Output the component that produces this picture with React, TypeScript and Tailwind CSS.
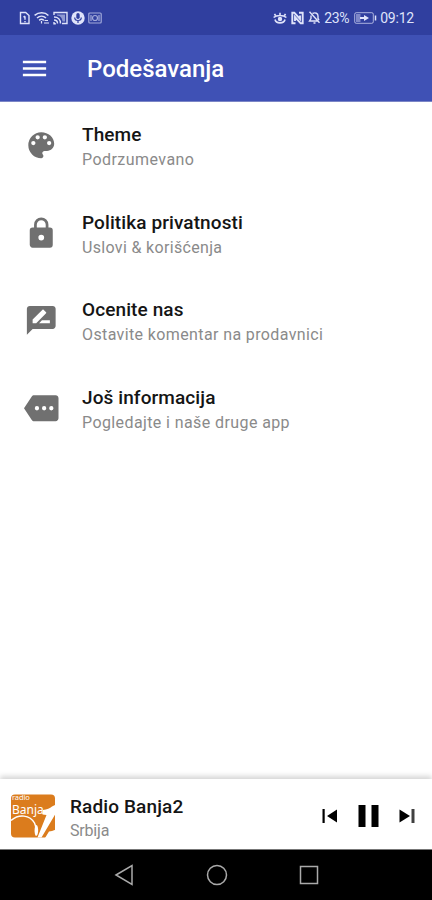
import React from 'react';

const settings = [
  {
    title: 'Theme',
    detail: 'Podrzumevano',
    detailSpacing: 'tracking-[0.45px]',
    icon: 'M12 3a9 9 0 0 0 0 18c.83 0 1.5-.67 1.5-1.5 0-.39-.15-.74-.39-1.01-.23-.26-.38-.61-.38-.99 0-.83.67-1.5 1.5-1.5H16c2.76 0 5-2.24 5-5 0-4.42-4.03-8-9-8zm-5.5 9a1.5 1.5 0 1 1 0-3 1.5 1.5 0 0 1 0 3zm3-4a1.5 1.5 0 1 1 0-3 1.5 1.5 0 0 1 0 3zm5 0a1.5 1.5 0 1 1 0-3 1.5 1.5 0 0 1 0 3zm3 4a1.5 1.5 0 1 1 0-3 1.5 1.5 0 0 1 0 3z',
  },
  {
    title: 'Politika privatnosti',
    detail: 'Uslovi & korišćenja',
    detailSpacing: 'tracking-[0.33px]',
    icon: 'M18 8h-1V6A5 5 0 0 0 7 6v2H6a2 2 0 0 0-2 2v10c0 1.1.9 2 2 2h12a2 2 0 0 0 2-2V10a2 2 0 0 0-2-2zm-6 9a2 2 0 1 1 0-4 2 2 0 0 1 0 4zm3.1-9H8.9V6a3.1 3.1 0 0 1 6.2 0v2z',
  },
  {
    title: 'Ocenite nas',
    detail: 'Ostavite komentar na prodavnici',
    detailSpacing: 'tracking-[0.38px]',
    icon: 'M20 2H4c-1.1 0-2 .9-2 2v18l4-4h14c1.1 0 2-.9 2-2V4c0-1.1-.9-2-2-2zM6 14v-2.47l6.88-6.88c.2-.2.51-.2.71 0l1.77 1.77c.2.2.2.51 0 .71L8.47 14H6zm12 0h-7.5l2-2H18v2z',
  },
  {
    title: 'Još informacija',
    detail: 'Pogledajte i naše druge app',
    detailSpacing: 'tracking-[0.4px]',
    icon: 'M22 3H7c-.69 0-1.23.35-1.59.88L0 12l5.41 8.11c.36.53.97.89 1.66.89H22c1.1 0 2-.9 2-2V5c0-1.1-.9-2-2-2zM9 13.5a1.5 1.5 0 1 1 0-3 1.5 1.5 0 0 1 0 3zm5 0a1.5 1.5 0 1 1 0-3 1.5 1.5 0 0 1 0 3zm5 0a1.5 1.5 0 1 1 0-3 1.5 1.5 0 0 1 0 3z',
  },
];

function StatusBar() {
  return (
    <div className="flex h-[35px] shrink-0 items-center justify-between bg-[#303f9f] pl-[19px] pr-[18px] text-[#dfe3fa]">
      <div className="flex items-center gap-[3px]">
        <svg className="h-[14px] w-[12px]" viewBox="0 0 12 14" fill="none" stroke="currentColor" strokeWidth="1.4">
          <path d="M1.5 1.5h5.2l3.3 3v8H1.5zM6 5.2v3.5M6 10v1.3M4.5 6.2L6 5.2" />
        </svg>
        <svg className="h-[14px] w-[16px]" viewBox="0 0 16 14" fill="none" stroke="currentColor" strokeWidth="1.5">
          <path d="M.6 4.4C4.5.9 11 .9 14.4 4.4M3 7c2.7-2.3 6.4-2.3 9 0M5.2 9.4c1.4-1.3 3.3-1.3 4.6 0" />
          <path d="M7.5 10v2.5M10 12h5M10.5 9.5H14" strokeWidth="1.2" />
        </svg>
        <svg className="h-[14px] w-[15px]" viewBox="0 0 15 14" fill="none" stroke="currentColor" strokeWidth="1.4">
          <path d="M1 4V1.5h13v11H9M1 6c4 0 6.5 2.5 6.5 6.5M1 9c2.2 0 3.5 1.3 3.5 3.5" />
          <path d="M4 3.5h8v7H9.5C9 6.5 7.5 5 4 4.5z" fill="currentColor" opacity=".55" stroke="none" />
          <path d="M1 11v1.8h1.8" />
        </svg>
        <svg className="h-[14px] w-[14px]" viewBox="0 0 14 14" fill="none">
          <circle cx="7" cy="7" r="6.7" fill="currentColor" />
          <rect x="5.3" y="2" width="3.4" height="6" rx="1.7" fill="#303f9f" />
          <path d="M3.7 6.5c0 4 6.6 4 6.6 0M7 9.5V12" stroke="#303f9f" strokeWidth="1.2" />
        </svg>
        <svg className="h-[12px] w-[14px] opacity-65" viewBox="0 0 14 12" fill="none" stroke="currentColor" strokeWidth="1.2">
          <rect x=".8" y="1" width="12.4" height="10" rx="1" />
          <circle cx="7" cy="6" r="2.5" />
          <path d="M3 3v6M11 3v6" />
        </svg>
      </div>
      <div className="flex items-center">
        <svg className="mr-[4px] h-[14px] w-[14px]" viewBox="0 0 14 14" fill="none" stroke="currentColor" strokeWidth="1.6">
          <path d="M.6 6.5c3-2.6 9.8-2.6 12.8 0M2 8.5c1 4.5 9 4.5 10 0M2.5 4.5L1.5 2.8M7 4V1.8M11.5 4.5l1-1.7" />
          <circle cx="7" cy="8" r="2.2" fill="currentColor" stroke="none" />
        </svg>
        <svg className="mr-[4px] h-[14px] w-[13px]" viewBox="0 0 13 14" fill="none" stroke="currentColor" strokeWidth="1.9">
          <path d="M4.5 12.3H1.3V1.7h2L9 8V4.5M8 1.7h3.7v10.6h-2L4 6v4" />
        </svg>
        <svg className="mr-[3px] h-[13px] w-[13px]" viewBox="0 0 12 13" fill="none" stroke="currentColor" strokeWidth="1.4">
          <path d="M1 .8l10 11M2.5 4.500v3L1 10h8M4 2.5C7 1 9.5 2.5 9.5 5v2.500l1 1.500M5 12h2" />
        </svg>
        <span className="w-[26px] text-[14px] leading-none tracking-[-0.3px]">23%</span>
        <svg className="ml-[4px] mr-[3px] h-[12px] w-[23px]" viewBox="0 0 23 12" fill="none">
          <rect x=".7" y=".7" width="18.6" height="10.6" rx="1.5" stroke="currentColor" strokeWidth="1" opacity=".7" />
          <rect x="2" y="2" width="4.5" height="8" fill="currentColor" opacity=".45" />
          <path d="M6 5h4V3l5 3-5 3V7H6z" fill="currentColor" />
          <path d="M21.500 3.500v5" stroke="currentColor" strokeWidth="1.5" />
        </svg>
        <span className="text-[14px] leading-none tracking-[-0.2px]">09:12</span>
      </div>
    </div>
  );
}

function StationLogo() {
  return (
    <div className="relative h-[44px] w-[45px] shrink-0 text-white">
      <svg className="h-[44px] w-[45px]" viewBox="0 0 45 44">
        <rect width="44" height="43" y=".5" rx="4" fill="#db7c1d" />
        <path d="M32 16q6-1 9-3.500l4-2V19L30.500 43.500h-4L35.500 21l-4-.5z" fill="white" />
        <path d="M45 35.500l-4 1.500-3 .5-4 6.500h11z" fill="white" />
        <path d="M0 26.500C8 19.500 19 21 23.500 29q1.500 3 1.500 7" fill="none" stroke="white" strokeWidth="1.500" />
        <path d="M25.500 31c-2.500 0-2.500 10-.5 11 2.500 0 3-10 .5-11z" fill="white" />
      </svg>
      <div className="absolute left-[1px] top-[-1px] font-['Noto_Sans',sans-serif]">
        <p className="text-[7.5px] leading-[9px] tracking-[-0.1px]">radio</p>
        <p className="text-[12px] leading-[15px]">Banja</p>
      </div>
    </div>
  );
}

function PlayerBar() {
  return (
    <div className="flex h-[70px] shrink-0 items-center bg-white pl-[11px] pt-[4px] shadow-[0_-3px_5px_rgba(0,0,0,0.16)]">
      <StationLogo />
      <div className="ml-[14px] flex-1 pt-[4px]">
        <p className="text-[19px] leading-[25px] font-medium tracking-[0.12px] text-[#151515]">Radio Banja2</p>
        <p className="text-[16px] leading-[23px] tracking-[-0.2px] text-[#8a8a8a]">Srbija</p>
      </div>
      <div className="flex items-center pr-[17px] text-black">
        <svg className="h-[16px] w-[16px]" viewBox="0 0 16 16" fill="currentColor">
          <path d="M.5 1h2.200v14H.5zM15 1.500v13L5 8z" />
        </svg>
        <svg className="ml-[20px] h-[24px] w-[21px]" viewBox="0 0 21 24" fill="currentColor">
          <path d="M.5 1h7v22h-7zM13.500 1h7v22h-7z" />
        </svg>
        <svg className="ml-[20px] h-[16px] w-[16px]" viewBox="0 0 16 16" fill="currentColor">
          <path d="M.5 1.500L11 8 .5 14.500z" />
          <path d="M12.500 1h3v14h-3z" opacity=".75" />
        </svg>
      </div>
    </div>
  );
}

export default function App() {
  return (
    <div className="flex h-[900px] w-[432px] flex-col overflow-hidden bg-white font-[Roboto,sans-serif]">
      <StatusBar />
      <header className="flex h-[67px] shrink-0 items-center border-b border-[#7b86c6] bg-[#3f51b5] pl-[19px] text-white">
        <svg className="h-[31px] w-[31px]" viewBox="0 0 24 24" fill="currentColor">
          <path d="M3 18h18v-2H3v2zm0-5h18v-2H3v2zm0-7v2h18V6H3z" />
        </svg>
        <h1 className="ml-[37px] pt-[2px] text-[24px] leading-none font-medium">Podešavanja</h1>
      </header>
      <main className="flex-1 pt-px">
        {settings.map((item) => (
          <div key={item.title} className="flex h-[87.5px] pl-[24px]">
            <svg className="mt-[25px] h-[34.5px] w-[34.5px] shrink-0 text-[#707070]" viewBox="0 0 24 24" fill="currentColor">
              <path d={item.icon} />
            </svg>
            <div className="ml-[23.5px] pt-[19px]">
              <p className="text-[19px] leading-[25px] font-medium tracking-[0.1px] text-[#151515]">{item.title}</p>
              <p className={`text-[16px] leading-[25px] text-[#8a8a8a] ${item.detailSpacing}`}>{item.detail}</p>
            </div>
          </div>
        ))}
      </main>
      <PlayerBar />
      <nav className="flex h-[51px] shrink-0 items-center justify-between border-t border-[#777] bg-black pl-[114px] pr-[113px] text-[#aaa]">
        <svg className="h-[22px] w-[20px]" viewBox="0 0 20 22" fill="none" stroke="currentColor" strokeWidth="1.5">
          <path d="M2 11L18 1.500v19z" />
        </svg>
        <svg className="h-[22px] w-[22px]" viewBox="0 0 22 22" fill="none" stroke="currentColor" strokeWidth="1.5">
          <circle cx="11" cy="11" r="9.5" />
        </svg>
        <svg className="h-[20px] w-[20px]" viewBox="0 0 20 20" fill="none" stroke="currentColor" strokeWidth="1.5">
          <rect x="1.5" y="1.5" width="17" height="17" />
        </svg>
      </nav>
    </div>
  );
}
